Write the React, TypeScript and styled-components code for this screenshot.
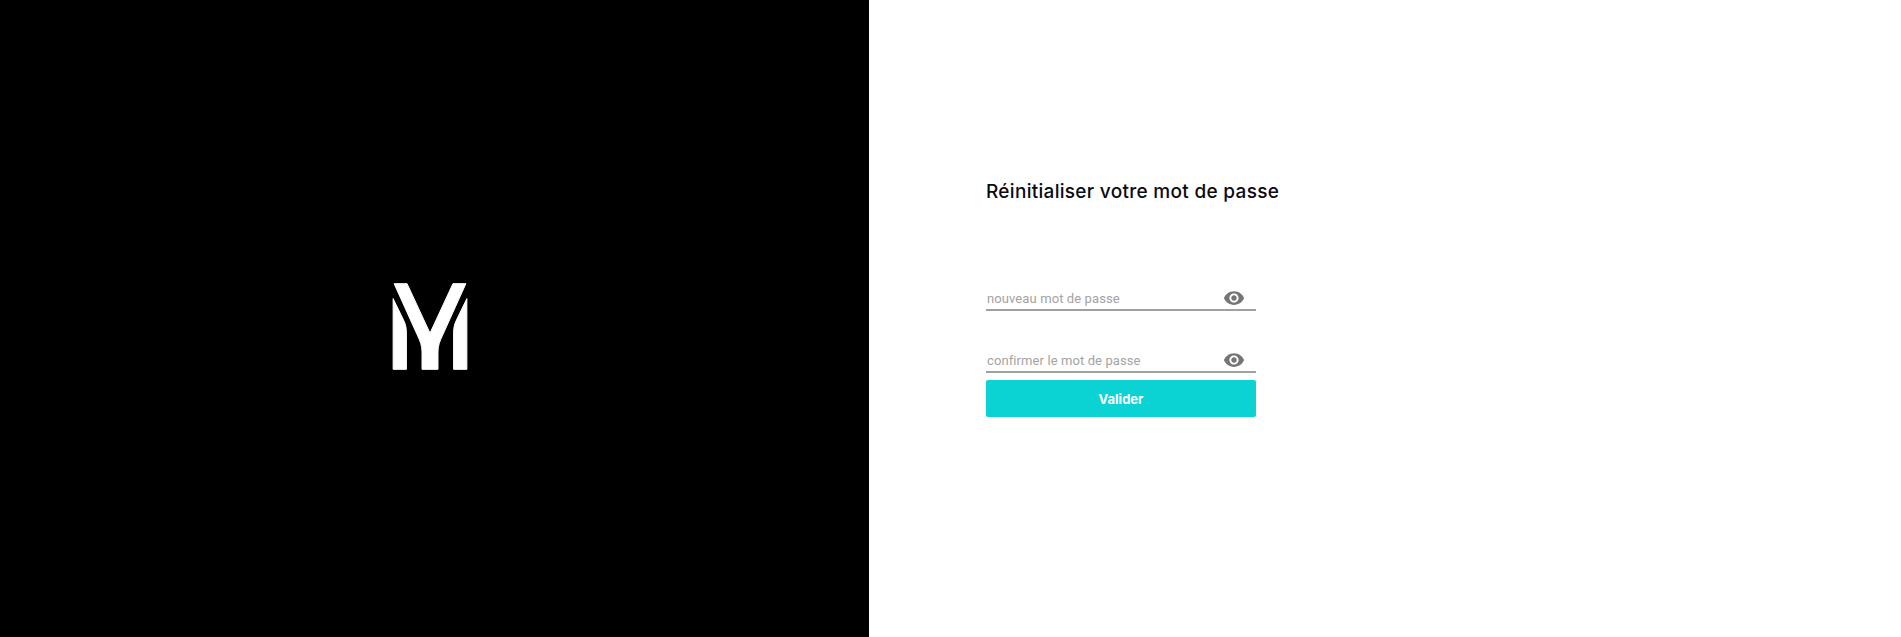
import styled, { createGlobalStyle } from 'styled-components';

const GlobalStyle = createGlobalStyle`
  html, body {
    margin: 0;
    padding: 0;
    background: #fff;
  }
`;

const Page = styled.div`
  display: flex;
  height: 637px;
  overflow: hidden;
  font-family: Inter, "Liberation Sans", sans-serif;
`;

// Panneau noir avec le logo
const BrandPanel = styled.aside`
  flex: 0 0 869px;
  display: flex;
  align-items: center;
  justify-content: center;
  background: #000;
  padding: 15px 9px 0 0;
  box-sizing: border-box;
`;

const FormPanel = styled.main`
  flex: 1;
  padding: 179px 0 0 117px;
  background: #fff;
`;

const Title = styled.h1`
  margin: 0 0 77px;
  font-size: 19px;
  line-height: 26px;
  font-weight: 500;
  color: #0a0a12;
  letter-spacing: 0.3px;
`;

const Form = styled.form`
  display: flex;
  flex-direction: column;
  width: 270px;
`;

const Field = styled.label<{ $spaced?: boolean }>`
  display: flex;
  align-items: center;
  height: 22px;
  padding-top: 5px;
  margin-top: ${(p) => (p.$spaced ? '33px' : '0')};
  border-bottom: 2px solid #a0a0a0;
`;

const Input = styled.input`
  flex: 1;
  min-width: 0;
  border: 0;
  outline: 0;
  padding: 0 0 0 1px;
  background: transparent;
  font-family: Roboto, sans-serif;
  font-size: 13px;
  letter-spacing: 0.1px;
  color: #333;

  &::placeholder {
    color: #a3a3a3;
    opacity: 1;
  }
`;

const EyeButton = styled.button`
  display: flex;
  border: 0;
  padding: 0;
  margin-right: 11px;
  background: none;
  color: #757575;
  cursor: pointer;
`;

const Submit = styled.button`
  height: 37px;
  margin-top: 7px;
  border: 0;
  border-radius: 2px;
  background: #0bd3d3;
  color: #fff;
  font-family: Inter, sans-serif;
  font-size: 13px;
  font-weight: 700;
  cursor: pointer;
`;

const Logo = () => (
  <svg width="76" height="89" viewBox="66 64 228 268" fill="#fff" stroke="#fff" strokeWidth="3" strokeLinejoin="round" aria-label="Logo">
    <path d="M72 69H111L180 218L249 69H288L219 222C209 243 204 256 204 275V327H156V275C156 256 151 243 141 222Z" />
    <path d="M69 114L100 178C107 192 109 203 109 218V327H69Z" />
    <path d="M291 114L260 178C253 192 251 203 251 218V327H291Z" />
  </svg>
);

const Eye = () => (
  <svg width="22" height="22" viewBox="0 0 24 24" fill="currentColor">
    <path d="M12 4.5C7 4.5 2.73 7.61 1 12c1.73 4.39 6 7.5 11 7.5s9.27-3.11 11-7.5c-1.73-4.39-6-7.5-11-7.5zM12 17c-2.76 0-5-2.24-5-5s2.24-5 5-5 5 2.24 5 5-2.24 5-5 5zm0-8c-1.66 0-3 1.34-3 3s1.34 3 3 3 3-1.34 3-3-1.34-3-3-3z" />
  </svg>
);

const App = () => {
  return (
    <Page>
      <GlobalStyle />
      <BrandPanel>
        <Logo />
      </BrandPanel>
      <FormPanel>
        <Title>Réinitialiser votre mot de passe</Title>
        <Form onSubmit={(e) => e.preventDefault()}>
          <Field>
            <Input type="password" placeholder="nouveau mot de passe" />
            <EyeButton type="button" aria-label="Afficher">
              <Eye />
            </EyeButton>
          </Field>
          <Field $spaced>
            <Input type="password" placeholder="confirmer le mot de passe" />
            <EyeButton type="button" aria-label="Afficher">
              <Eye />
            </EyeButton>
          </Field>
          <Submit type="submit">Valider</Submit>
        </Form>
      </FormPanel>
    </Page>
  );
};

export default App;
